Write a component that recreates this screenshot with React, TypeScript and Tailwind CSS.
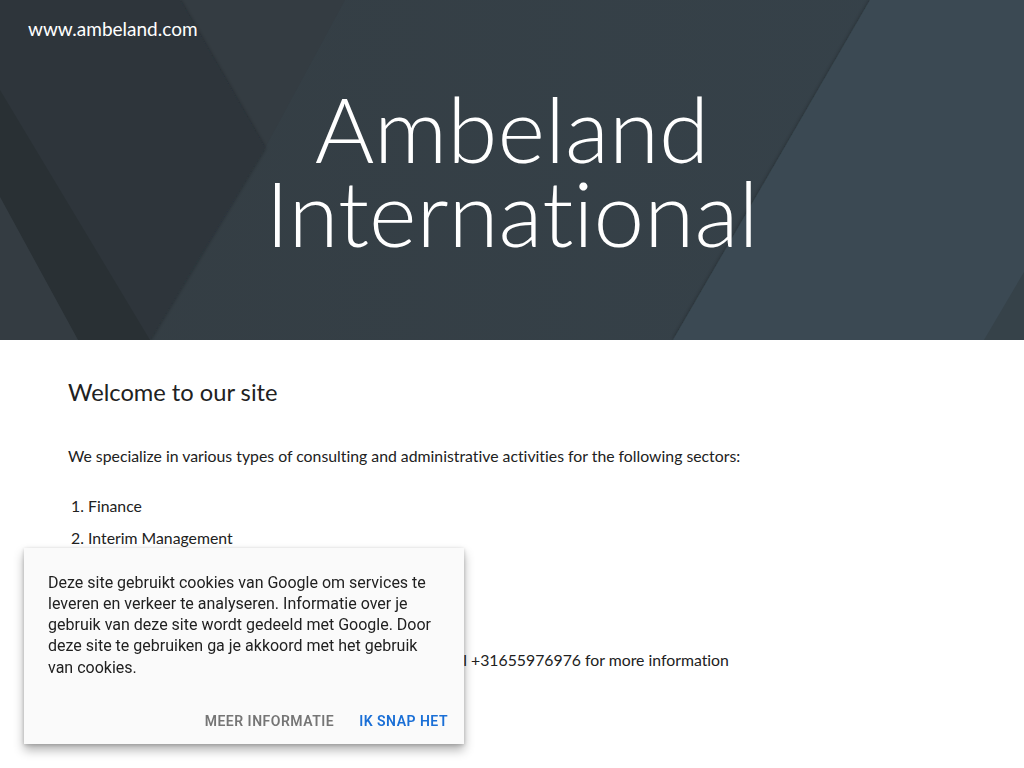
import React from 'react'

const lato = { fontFamily: 'Lato, "Open Sans", sans-serif' }

function HeroBackground() {
  return (
    <svg
      className="absolute inset-0 h-full w-full"
      viewBox="0 0 1024 340"
      preserveAspectRatio="none"
      aria-hidden="true"
    >
      <defs>
        <linearGradient id="mid" x1="0" y1="0" x2="1" y2="0">
          <stop offset="0" stopColor="#343d43" />
          <stop offset="1" stopColor="#36424a" />
        </linearGradient>
        <filter id="soft" x="-10%" y="-10%" width="120%" height="120%">
          <feDropShadow dx="0" dy="0" stdDeviation="2" floodColor="#000" floodOpacity="0.35" />
        </filter>
      </defs>
      <rect width="1024" height="340" fill="url(#mid)" />
      {/* right light panel */}
      <polygon points="870,0 1024,0 1024,340 673,340" fill="#3a4a53" filter="url(#soft)" />
      <polygon points="1024,272 1024,340 984,340" fill="#364249" />
      {/* top band between the two left diagonals */}
      <polygon points="180,0 345,0 265,148" fill="#343c42" />
      {/* left dark wedge */}
      <polygon points="0,0 180,0 265,148 150,340 0,340" fill="#2d353b" filter="url(#soft)" />
      {/* darker strip */}
      <polygon points="0,90 150,340 78,340 0,197" fill="#293034" />
      {/* lighter bottom-left corner */}
      <polygon points="0,197 78,340 0,340" fill="#343c42" />
    </svg>
  )
}

function CookieNotice() {
  return (
    <div
      className="fixed bottom-6 left-6 w-[440px] bg-[#fafafa] pt-6 pr-[8px] pb-[5px] pl-6 shadow-[0_6px_10px_rgba(0,0,0,0.3),0_1px_4px_rgba(0,0,0,0.2)]"
      style={{ fontFamily: 'Roboto, "Noto Sans", sans-serif' }}
    >
      <p className="pr-[16px] text-[16px] leading-[21.3px] text-[#212121]">
        Deze site gebruikt cookies van Google om services te leveren en verkeer te analyseren. Informatie
        over je gebruik van deze site wordt gedeeld met Google. Door deze site te gebruiken ga je akkoord
        met het gebruik van cookies.
      </p>
      <div className="mt-[25px] flex justify-end gap-[9px]">
        <button className="px-2 py-2 text-[14px] font-semibold uppercase leading-5 tracking-[0.5px] text-[#757575]">
          Meer informatie
        </button>
        <button className="px-2 py-2 text-[14px] font-semibold uppercase leading-5 tracking-[0.5px] text-[#1a6fd6]">
          Ik snap het
        </button>
      </div>
    </div>
  )
}

export default function App() {
  return (
    <div className="min-h-[768px] bg-white [font-variant-ligatures:none]" style={lato}>
      {/* Hero */}
      <header className="relative h-[340px] overflow-hidden">
        <HeroBackground />
        <div className="relative">
          <div className="px-[28px] pt-[17px] text-[19px] leading-6 text-white">www.ambeland.com</div>
          <h1 className="mt-[45px] text-center text-[91px] font-light leading-[84px] text-white">
            Ambeland
            <br />
            International
          </h1>
        </div>
      </header>

      {/* Content */}
      <main className="px-[68px] pt-[36px] text-[#212121]">
        <h2 className="text-[23.7px] leading-8">Welcome to our site</h2>
        <p className="mt-[36px] text-[15.8px] leading-6">
          We specialize in various types of consulting and administrative activities for the following sectors:
        </p>
        <ol className="mt-[26px] list-decimal pl-5 text-[15.8px] leading-6">
          <li className="mb-2">Finance</li>
          <li className="mb-2">Interim Management</li>
          <li className="mb-2">Accounting</li>
          <li className="mb-2">Real Estate</li>
        </ol>
        <p className="mt-[34px] text-[15.8px] leading-6">
          Feel free to send an e-mail to: info@ambeland.com, or call +31655976976 for more information
        </p>
      </main>

      <CookieNotice />
    </div>
  )
}
